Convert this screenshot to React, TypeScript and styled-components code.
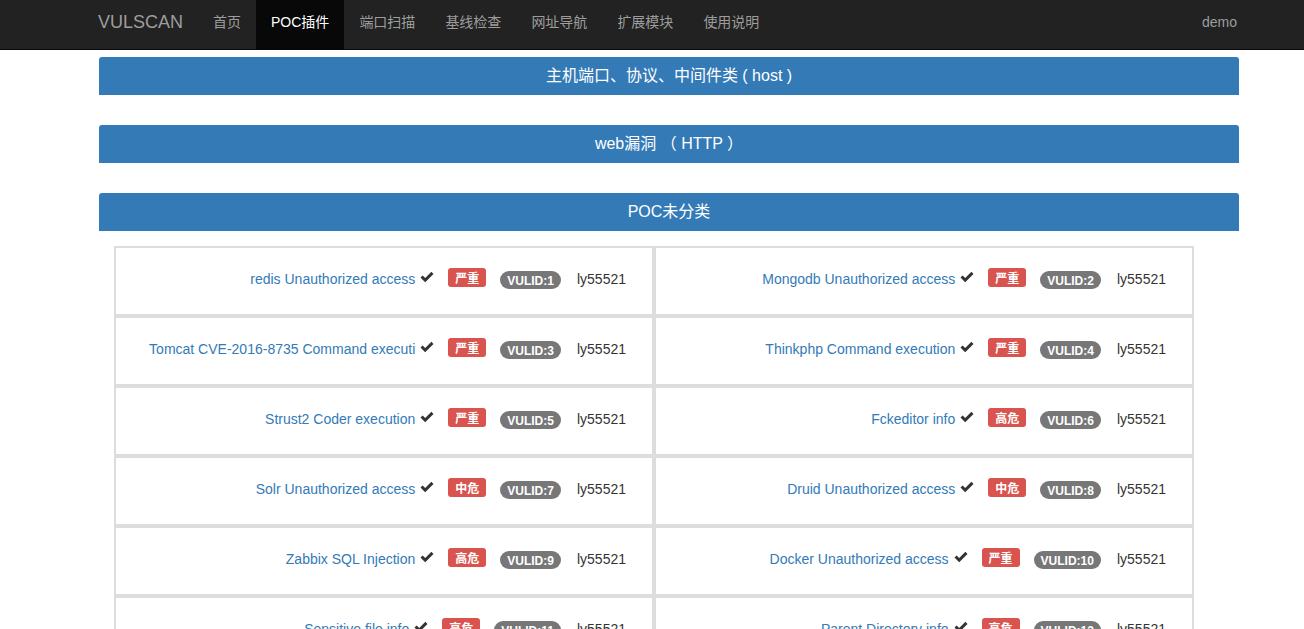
import React from "react";
import styled, { createGlobalStyle } from "styled-components";

const Global = createGlobalStyle`
  html, body { margin: 0; padding: 0; background: #fff; }
  body {
    font-family: "Liberation Sans", Arial, "Noto Sans CJK SC", sans-serif;
    font-size: 14px;
    line-height: 20px;
    color: #333;
  }
  * { box-sizing: border-box; }
`;

const Navbar = styled.nav`
  height: 50px;
  background: #222;
  border-bottom: 1px solid #080808;
  display: flex;
  align-items: stretch;
  padding: 0 52px 0 83px;
`;

const Brand = styled.a`
  display: flex;
  align-items: center;
  padding: 0 15px 6px;
  font-size: 18px;
  color: #9d9d9d;
  text-decoration: none;
  height: 49px;
`;

const NavList = styled.ul`
  display: flex;
  list-style: none;
  margin: 0;
  padding: 0;
`;

const NavItem = styled.li<{ $active?: boolean }>`
  display: flex;
  align-items: center;
  padding: 0 15px 6px;
  height: 49px;
  font-size: 14px;
  background: ${(p) => (p.$active ? "#080808" : "transparent")};
  color: ${(p) => (p.$active ? "#fff" : "#9d9d9d")};
  cursor: pointer;
`;

const NavRight = styled.div`
  margin-left: auto;
  display: flex;
  align-items: center;
  padding: 0 15px 5px;
  height: 49px;
  color: #9d9d9d;
  font-size: 14px;
`;

const Main = styled.main`
  padding: 7px 0 0 99px;
  width: 1239px;
`;

const Section = styled.section`
  margin-bottom: 30px;
`;

const PanelHead = styled.div`
  height: 38px;
  background: #337ab7;
  border-top-left-radius: 3px;
  border-top-right-radius: 3px;
  color: #fff;
  font-size: 16px;
  display: flex;
  align-items: center;
  justify-content: center;
`;

const Grid = styled.div`
  margin: 15px 0 0 15px;
  width: 1080px;
  display: grid;
  grid-template-columns: 540px 540px;
`;

const Cell = styled.div`
  height: 70px;
  border: 2px solid #ddd;
  display: flex;
  align-items: center;
  justify-content: flex-end;
  padding: 0 26px 5px 0;
  white-space: nowrap;
`;

const PocLink = styled.a`
  color: #337ab7;
  text-decoration: none;
  font-size: 14px;
`;

const Check = styled.svg`
  width: 14px;
  height: 12px;
  margin-left: 5px;
  margin-top: -3px;
`;

const Level = styled.span`
  display: inline-block;
  margin-left: 14px;
  background: #d9534f;
  color: #fff;
  font-weight: bold;
  font-size: 12px;
  line-height: 15px;
  padding: 2px 7px 2px;
  border-radius: 3px;
  font-family: "Noto Sans CJK SC", sans-serif;
  margin-top: -2px;
`;

const Badge = styled.span`
  display: inline-block;
  margin-left: 14px;
  background: #777;
  color: #fff;
  font-weight: bold;
  font-size: 12px;
  line-height: 12px;
  padding: 4px 7px 2px;
  border-radius: 10px;
  margin-top: 3px;
`;

const Author = styled.span`
  margin-left: 16px;
  color: #333;
  font-size: 14px;
`;

type Poc = { name: string; level: string; id: number };

const pocs: Poc[] = [
  { name: "redis Unauthorized access", level: "严重", id: 1 },
  { name: "Mongodb Unauthorized access", level: "严重", id: 2 },
  { name: "Tomcat CVE-2016-8735 Command executi", level: "严重", id: 3 },
  { name: "Thinkphp Command execution", level: "严重", id: 4 },
  { name: "Strust2 Coder execution", level: "严重", id: 5 },
  { name: "Fckeditor info", level: "高危", id: 6 },
  { name: "Solr Unauthorized access", level: "中危", id: 7 },
  { name: "Druid Unauthorized access", level: "中危", id: 8 },
  { name: "Zabbix SQL Injection", level: "高危", id: 9 },
  { name: "Docker Unauthorized access", level: "严重", id: 10 },
  { name: "Sensitive file info", level: "高危", id: 11 },
  { name: "Parent Directory info", level: "高危", id: 12 },
];

const CheckIcon = () => (
  <Check viewBox="0 0 14 12">
    <path d="M0.5 6.5 L2.6 4.4 L5.2 7 L11.4 0.8 L13.5 2.9 L5.2 11.2 Z" fill="#333" />
  </Check>
);

const navs = ["首页", "POC插件", "端口扫描", "基线检查", "网址导航", "扩展模块", "使用说明"];

export default function App() {
  return (
    <>
      <Global />
      <Navbar>
        <Brand>VULSCAN</Brand>
        <NavList>
          {navs.map((n) => (
            <NavItem key={n} $active={n === "POC插件"}>
              {n}
            </NavItem>
          ))}
        </NavList>
        <NavRight>demo</NavRight>
      </Navbar>
      <Main>
        <Section>
          <PanelHead>主机端口、协议、中间件类 ( host )</PanelHead>
        </Section>
        <Section>
          <PanelHead>web漏洞 （ HTTP ）</PanelHead>
        </Section>
        <Section>
          <PanelHead>POC未分类</PanelHead>
          <Grid>
            {pocs.map((p) => (
              <Cell key={p.id}>
                <PocLink>{p.name}</PocLink>
                <CheckIcon />
                <Level>{p.level}</Level>
                <Badge>VULID:{p.id}</Badge>
                <Author>ly55521</Author>
              </Cell>
            ))}
          </Grid>
        </Section>
      </Main>
    </>
  );
}
